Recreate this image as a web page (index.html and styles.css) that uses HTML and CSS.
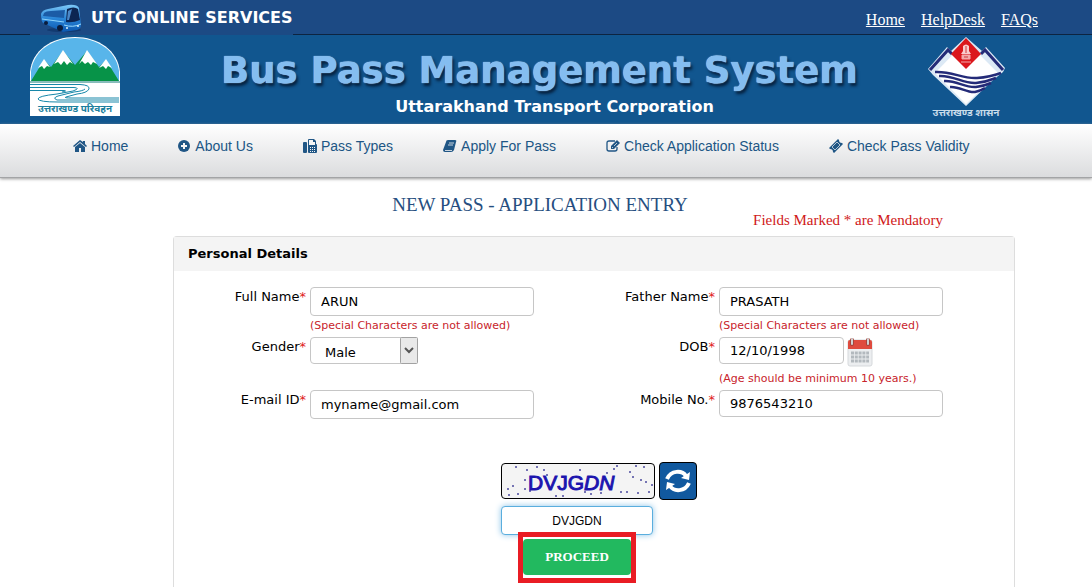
FILE: index.html
```html
<!DOCTYPE html>
<html lang="en">
<head>
    <meta charset="UTF-8">
    <meta name="viewport" content="width=device-width, initial-scale=1.0">
    <title>Bus Pass Management System</title>
    <link rel="stylesheet" href="styles.css">
</head>
<body>
    <div class="topbar">
        <div class="brand">
            <svg class="bus" width="44" height="30" viewBox="0 0 44 30" aria-hidden="true">
                <defs>
                    <linearGradient id="busSide" x1="0" y1="0" x2="0" y2="1">
                        <stop offset="0" stop-color="#7cc8f7"/>
                        <stop offset="0.5" stop-color="#2a86d8"/>
                        <stop offset="1" stop-color="#0b57b0"/>
                    </linearGradient>
                </defs>
                <ellipse cx="24" cy="27" rx="17" ry="2" fill="#123a70"/>
                <path d="M1 11 Q2 7 8 6 L28 2 Q37 1 39 5 L41 22 Q41 26 37 27 L23 29 L3 20 Q1 18 1 11 Z" fill="url(#busSide)"/>
                <path d="M4 10 Q6 8 11 8 L25 7 L24 15 L3 13 Z" fill="#1b5ba6"/>
                <path d="M2 16 L24 19" stroke="#8ed4fb" stroke-width="1"/>
                <path d="M27 6 Q34 3 38 6 L40 17 Q33 20 26 19 Z" fill="#0c2552"/>
                <path d="M28 8 L32 6 L29 17 L27 17 Z" fill="#4a87c8"/>
                <path d="M24 22 Q33 25 41 21" stroke="#9adcff" stroke-width="1" fill="none"/>
                <circle cx="6" cy="20" r="2" fill="#0a1c3c"/>
                <circle cx="20" cy="25" r="3" fill="#0a1c3c"/>
                <circle cx="27" cy="25" r="1" fill="#d8f1ff"/>
                <circle cx="38" cy="23" r="1" fill="#d8f1ff"/>
            </svg>
            <span class="brand-name">UTC ONLINE SERVICES</span>
        </div>
        <div class="top-links">
            <a href="#">Home</a>
            <a href="#">HelpDesk</a>
            <a href="#">FAQs</a>
        </div>
    </div>

    <header class="header">
        <svg width="90" height="79" viewBox="0 0 90 79" role="img" aria-label="Uttarakhand Parivahan">
            <path d="M0 79 V35 C2 13 22 0 45 0 S88 13 90 35 V79 Z" fill="#fff"/>
            <path d="M1 44 V34 C4 13 23 1 45 1 S86 13 89 34 V44 Z" fill="#58b5ea"/>
            <path d="M1 44 L14 23 L21 30 L33 14 L45 28 L57 14 L69 30 L76 23 L89 44 Z" fill="#079348"/>
            <path d="M33 13 L24 27 L28 25 L31 28 L34 24 L37 28 L40 25 L43 27 Z M57 13 L49 27 L52 24 L55 27 L58 25 L61 28 L63 25 L67 27 Z M14 22 L8 31 L12 29 L14 32 L17 29 L20 30 Z M76 22 L69 31 L73 29 L76 32 L78 29 L82 31 Z" fill="#fff"/>
            <path d="M0 45 H90" stroke="#127a79" stroke-width="1"/>
            <g fill="none" stroke="#1687a9" stroke-width="1">
                <path d="M0 47.5 H50 Q60 48 59 52 Q57 56 47 57 L36 60 Q33 61 42 61 H89"/>
                <path d="M0 50.5 H44 Q51 51 43 54 L27 57 Q8 59 8 62 Q9 65 28 65 H89"/>
                <path d="M0 53.5 H34 Q38 54 32 55"/>
                <path d="M55 52 Q53 54 44 55 L28 59 Q22 61 27 63 H89"/>
            </g>
            <text x="45" y="75" text-anchor="middle" class="logo-text logo-text-blue">उत्तराखण्ड परिवहन</text>
        </svg>
        <div class="titles">
            <h1>Bus Pass Management System</h1>
            <p>Uttarakhand Transport Corporation</p>
        </div>
        <svg width="77" height="82" viewBox="0 0 77 82" role="img" aria-label="Uttarakhand Shasan">
            <path d="M38 0 L54 14 L58 10 L77 31 L75 35 L64 44 L38 69 L5 38 L0 32 L19 10 L23 14 Z" fill="#dce9f5"/>
            <path d="M38 4 L70 36 L38 67 L7 36 Z" fill="#fff"/>
            <path d="M2 33 L20 13 L24 17 M75 33 L57 13 L53 17" fill="none" stroke="#242b78" stroke-width="3"/>
            <path d="M38 1 L53 17 L38 32 L23 17 Z" fill="#db171c"/>
            <g fill="none" stroke="#242b78" stroke-width="2.5">
                <path d="M7 35 C24 34 34 42 49 41 Q62 40 73 36"/>
                <path d="M11 39 C26 38 35 47 48 46 Q58 45 68 41"/>
                <path d="M16 44 C28 43 37 51 48 50 Q56 49 63 46"/>
                <path d="M22 50 C31 49 39 56 47 55 Q52 54 57 51"/>
            </g>
            <path d="M35 9 Q38 6 41 9 V14 L43 17 H33 L35 14 Z" fill="#f9cccc"/>
            <path d="M34 18 H42 V22 H34 Z M33 25 H43" fill="#f3aaaa" stroke="#f3aaaa"/>
            <path d="M38 9 V16 M36 20 H40" stroke="#cc3b3f"/>
            <text x="38" y="79" text-anchor="middle" class="logo-text logo-text-light">उत्तराखण्ड शासन</text>
        </svg>
    </header>

    <nav class="nav">
        <a href="#">
            <svg width="14" height="14" viewBox="0 0 14 14"><path d="M7 4 L12 8 V13 H8 V9 H6 V13 H2 V8 Z M0 7 L7 1 L10 3 V2 H12 V5 L14 7 L13 8 L7 3 L1 8 Z" fill="currentColor"/></svg>
            Home
        </a>
        <a href="#">
            <svg width="13" height="14" viewBox="0 0 13 14"><circle cx="6" cy="7" r="6" fill="currentColor"/><path d="M6 4 V10 M3 7 H9" stroke="#f5f5f5" stroke-width="2"/></svg>
            About Us
        </a>
        <a href="#">
            <svg width="14" height="14" viewBox="0 0 14 14"><path d="M0 4 Q0 3 1 3 H3 Q4 3 4 4 V13 Q4 14 3 14 H1 Q0 14 0 13 Z M6 0 H11 L13 2 V5 Q14 5 14 6 V13 Q14 14 13 14 H6 Q5 14 5 13 V1 Q5 0 6 0 Z" fill="currentColor"/><path d="M6 1 H10 V3 H12 V6 H6 Z" fill="#f5f5f5"/><path d="M7 8.5 H13 M7 10.5 H13 M7 12.5 H13" stroke="#f5f5f5" stroke-dasharray="1 1"/></svg>
            Pass Types
        </a>
        <a href="#">
            <svg width="14" height="14" viewBox="0 0 14 14"><path d="M5 1 H12 Q14 1 13 3 L11 11 Q10 13 8 13 H2 Q0 13 0 11 L3 3 Q3 1 5 1 Z" fill="currentColor"/><path d="M6 4 H11 M5 6 H10 M2 11.5 H9" fill="none" stroke="#f5f5f5" stroke-width="0.8"/></svg>
            Apply For Pass
        </a>
        <a href="#">
            <svg width="14" height="14" viewBox="0 0 14 14"><path d="M9 2 H3 Q1 2 1 4 V10 Q1 12 3 12 H9 Q11 12 11 10 V8" fill="none" stroke="currentColor" stroke-width="1.3"/><path d="M5 7 L11 1 L14 4 L8 10 H5 Z" fill="currentColor"/><path d="M6 8 L7 9 M8 7 L11 4" stroke="#f5f5f5" stroke-width="0.7"/></svg>
            Check Application Status
        </a>
        <a href="#">
            <svg width="14" height="14" viewBox="0 0 14 14"><path d="M9 0 L10 1 Q10 4 13 4 L14 5 L5 14 L4 13 Q4 10 1 10 L0 9 Z" fill="currentColor"/><path d="M8 3 L11 6 L6 11 L3 8 Z" fill="none" stroke="#f5f5f5" stroke-width="0.7"/></svg>
            Check Pass Validity
        </a>
    </nav>

    <main>
        <h2>NEW PASS - APPLICATION ENTRY</h2>
        <p class="mandatory">Fields Marked * are Mendatory</p>

        <form class="panel">
            <h3>Personal Details</h3>
            <div class="fields">
                <label for="fullName">Full Name<span class="req">*</span></label>
                <div class="field">
                    <input type="text" id="fullName" value="ARUN">
                    <small>(Special Characters are not allowed)</small>
                </div>
                <label for="fatherName">Father Name<span class="req">*</span></label>
                <div class="field">
                    <input type="text" id="fatherName" value="PRASATH">
                    <small>(Special Characters are not allowed)</small>
                </div>

                <label for="gender">Gender<span class="req">*</span></label>
                <div class="field">
                    <div class="select-box">
                        <select id="gender">
                            <option>Male</option>
                            <option>Female</option>
                        </select>
                        <svg class="select-arrow" width="18" height="27" viewBox="0 0 18 27" aria-hidden="true">
                            <rect x="0.5" y="0.5" width="17" height="26" rx="1" fill="#e9e9e9" stroke="#a2a2a2"/>
                            <path d="M5 11 L9 15 L13 11" fill="none" stroke="#555" stroke-width="2"/>
                        </svg>
                    </div>
                </div>
                <label for="dob">DOB<span class="req">*</span></label>
                <div class="field">
                    <div class="date-row">
                        <input type="text" id="dob" class="short" value="12/10/1998">
                        <button type="button" class="calendar" aria-label="Pick date">
                            <svg width="26" height="30" viewBox="0 0 26 30">
                                <rect x="1" y="3" width="24" height="26" rx="2" fill="#eceef0" stroke="#d6d9dc"/>
                                <path d="M1 12 V5 Q1 3 3 3 H23 Q25 3 25 5 V12 Z" fill="#df4b3e"/>
                                <path d="M4 16 H22 M4 20 H22 M4 24 H22" stroke="#b3b9be" stroke-width="3" stroke-dasharray="3 0.8"/>
                                <path d="M5 3 V7 M21 3 V7" stroke="#a5433b" stroke-width="4" stroke-linecap="round"/>
                                <path d="M5 2 V7 M21 2 V7" stroke="#d0d1d2" stroke-width="2" stroke-linecap="round"/>
                            </svg>
                        </button>
                    </div>
                    <small>(Age should be minimum 10 years.)</small>
                </div>

                <label for="email">E-mail ID<span class="req">*</span></label>
                <div class="field">
                    <input type="text" id="email" value="myname@gmail.com">
                </div>
                <label for="mobile">Mobile No.<span class="req">*</span></label>
                <div class="field">
                    <input type="text" id="mobile" class="low" value="9876543210">
                </div>
            </div>

            <div class="verify">
                <div class="captcha-row">
                    <svg class="captcha" width="152" height="34" viewBox="0 0 152 34" role="img" aria-label="Captcha">
                        <g fill="#4b4a9e">
                            <circle cx="6" cy="25" r="1"/><circle cx="11" cy="22" r="1"/><circle cx="7" cy="31" r="1"/><circle cx="16" cy="30" r="1"/>
                            <circle cx="14" cy="3" r="1"/><circle cx="25" cy="6" r="1"/><circle cx="35" cy="3" r="1"/><circle cx="42" cy="6" r="1"/>
                            <circle cx="45" cy="11" r="1"/><circle cx="23" cy="16" r="1"/><circle cx="23" cy="25" r="1"/><circle cx="28" cy="27" r="1"/>
                            <circle cx="54" cy="32" r="1"/><circle cx="61" cy="32" r="1"/><circle cx="78" cy="6" r="1"/><circle cx="83" cy="28" r="1"/>
                            <circle cx="89" cy="30" r="1"/><circle cx="99" cy="29" r="1"/><circle cx="105" cy="9" r="1"/><circle cx="112" cy="5" r="1"/>
                            <circle cx="115" cy="2" r="1"/><circle cx="128" cy="8" r="1"/><circle cx="134" cy="2" r="1"/><circle cx="142" cy="3" r="1"/>
                            <circle cx="131" cy="13" r="1"/><circle cx="139" cy="16" r="1"/><circle cx="144" cy="18" r="1"/><circle cx="147" cy="28" r="1"/>
                            <circle cx="119" cy="28" r="1"/><circle cx="125" cy="28" r="1"/><circle cx="136" cy="29" r="1"/><circle cx="150" cy="21" r="1"/>
                        </g>
                        <text x="26" y="26" class="captcha-text">DVJG<tspan font-style="italic">DN</tspan></text>
                    </svg>
                    <button type="button" class="refresh" aria-label="Refresh captcha">
                        <svg width="26" height="26" viewBox="0 0 26 26">
                            <g fill="none" stroke="#fff" stroke-width="4">
                                <path d="M2 11 C6 2 17 2 21 8"/>
                                <path d="M24 15 C20 24 9 24 5 18"/>
                            </g>
                            <path d="M25 4 L24 12 L16 10 Z M1 22 L2 14 L10 16 Z" fill="#fff"/>
                        </svg>
                    </button>
                </div>
                <input type="text" class="captcha-input" value="DVJGDN" aria-label="Enter captcha">
                <div class="highlight">
                    <button type="submit" class="proceed">PROCEED</button>
                </div>
            </div>
        </form>
    </main>
</body>
</html>
```
FILE: styles.css
```css
* {
    box-sizing: border-box;
}
body {
    display: flex;
    flex-direction: column;
    min-height: 100vh;
    margin: 0;
    background: #fff;
    color: #000;
    font-family: Verdana, "DejaVu Sans", sans-serif;
    font-size: 13px;
}
h1, h2, h3, p {
    margin: 0;
}

/* Top bar */
.topbar {
    display: flex;
    justify-content: space-between;
    align-items: flex-start;
    height: 35px;
    padding: 0 54px 0 30px;
    background: #1c4a84;
    border-bottom: 1px solid #0d2440;
}
.brand {
    display: flex;
    align-items: center;
    height: 35px;
    padding-left: 10px;
    background: #1c4a84;
}
.bus {
    margin-right: 7px;
}
.brand-name {
    color: #fff;
    font-size: 16px;
    font-weight: bold;
}
.top-links {
    display: flex;
    gap: 16px;
    padding-top: 11px;
}
.top-links a {
    color: #fff;
    font-family: "Palatino Linotype", "Liberation Serif", serif;
    font-size: 16px;
    line-height: 18px;
}

/* Header */
.header {
    display: flex;
    align-items: flex-start;
    padding: 2px 87px 4px 30px;
    background: #11568f;
}
.titles {
    flex: 1;
    padding: 11px 0 0 31px;
    text-align: center;
    white-space: nowrap;
}
h1 {
    color: #84bdf0;
    font-size: 37px;
    line-height: 46px;
    text-shadow: 0 0 1px #c4e2fb, 2px 3px 3px #06213f;
}
.titles p {
    padding-left: 30px;
    color: #fff;
    font-size: 16px;
    font-weight: bold;
    line-height: 26px;
}
.logo-text {
    font-family: "Noto Sans", "Noto Sans Devanagari", sans-serif;
    font-size: 10px;
    font-weight: bold;
}
.logo-text-blue {
    fill: #1c7f9e;
}
.logo-text-light {
    fill: #c9dcea;
}

/* Navigation */
.nav {
    display: flex;
    gap: 50px;
    height: 54px;
    padding: 12px 73px 0;
    background: linear-gradient(#fff, #dbdcde);
    border-bottom: 1px solid #a3a4a6;
    box-shadow: 0 1px 3px #999;
    white-space: nowrap;
}
.nav a {
    display: flex;
    align-items: center;
    gap: 4px;
    height: 20px;
    color: #205685;
    font-family: Arial, "Liberation Sans", sans-serif;
    font-size: 14px;
    text-decoration: none;
}

/* Application form */
main {
    display: flex;
    flex: 1;
    flex-direction: column;
    padding: 17px 77px 0 173px;
}
h2 {
    padding-right: 108px;
    color: #264e80;
    font-family: "Palatino Linotype", "Liberation Serif", serif;
    font-size: 19px;
    font-weight: normal;
    line-height: 20px;
    text-align: center;
}
.mandatory {
    padding: 0 72px 11px 0;
    color: #d01818;
    font-family: "Palatino Linotype", "Liberation Serif", serif;
    font-size: 15px;
    line-height: 10px;
    text-align: right;
}
.panel {
    flex: 1;
    border: 1px solid #ddd;
    border-bottom: none;
    border-radius: 4px 4px 0 0;
}
h3 {
    padding: 0 14px;
    background: #f4f4f4;
    font-size: 13px;
    line-height: 34px;
}
.fields {
    display: grid;
    grid-template-columns: 132fr 224fr 177fr 224fr;
    column-gap: 4px;
    padding: 16px 71px 0 0;
}
.fields label {
    line-height: 20px;
    text-align: right;
}
.req {
    color: #e02020;
}
.field {
    min-width: 0;
}
.field input,
select {
    display: block;
    width: 100%;
    height: 29px;
    padding: 0 10px;
    border: 1px solid #c6c6c6;
    border-radius: 4px;
    background: #fff;
    color: #000;
    font: inherit;
}
.field input.short,
.field input.low,
select {
    height: 27px;
}
.field input.short {
    width: 125px;
}
.field small {
    display: block;
    color: #c8242b;
    font-size: 11px;
    line-height: 13px;
    padding: 3px 0 5px;
    white-space: nowrap;
}
.select-box {
    position: relative;
    width: 108px;
}
select {
    appearance: none;
    padding: 3px 14px 0;
}
.select-arrow {
    position: absolute;
    top: 0;
    right: 0;
    pointer-events: none;
}
.date-row {
    display: flex;
    align-items: flex-start;
    gap: 3px;
    height: 32px;
}
.calendar {
    padding: 0;
    border: none;
    background: none;
}

/* Captcha and submit */
.verify {
    width: fit-content;
    margin: 43px auto 0;
    padding-left: 10px;
}
.captcha-row {
    display: flex;
    align-items: center;
    gap: 4px;
}
.captcha {
    box-sizing: content-box;
    border: 1px solid #000;
    border-radius: 4px;
    background: #f4f4f4;
}
.captcha-text {
    fill: #1c14ae;
    stroke: #1c14ae;
    stroke-width: 1px;
    font-family: Arial, "Liberation Sans", sans-serif;
    font-size: 21px;
}
.refresh {
    display: flex;
    align-items: center;
    justify-content: center;
    width: 38px;
    height: 38px;
    padding: 0;
    border: 1px solid #000;
    border-radius: 4px;
    background: #11599f;
}
.captcha-input {
    display: block;
    width: 152px;
    height: 29px;
    margin-top: 6px;
    border: 1px solid #5aaede;
    border-radius: 4px;
    box-shadow: 0 0 6px #8cc4e8;
    font-family: Arial, "Liberation Sans", sans-serif;
    font-size: 12px;
    text-align: center;
}
.highlight {
    position: relative;
    width: 118px;
    margin: -3px 0 0 17px;
    padding: 2px 0 3px;
    border: 5px solid #e91c24;
    background: #fff;
}
.proceed {
    display: block;
    width: 100%;
    height: 36px;
    border: none;
    border-radius: 4px;
    background: #22b95f;
    color: #fff;
    font-family: "Palatino Linotype", "Liberation Serif", serif;
    font-size: 13px;
    font-weight: bold;
}
```
